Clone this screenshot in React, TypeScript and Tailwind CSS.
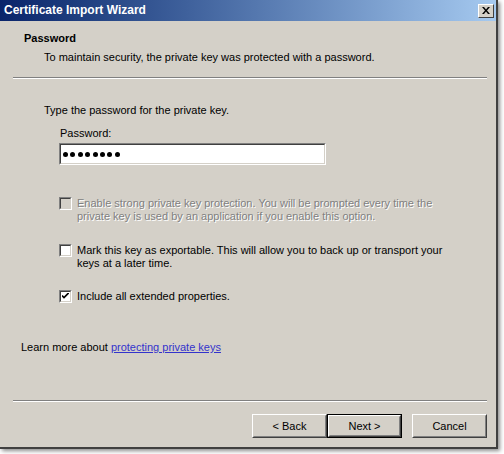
import React from "react";

const font = { fontFamily: '"Liberation Sans", Arial, sans-serif' };

function Check({ checked = false, disabled = false }: { checked?: boolean; disabled?: boolean }) {
  return (
    <div className="w-[13px] h-[13px] shrink-0 border border-t-[#808080] border-l-[#808080] border-r-white border-b-white">
      <div
        className={`w-full h-full border border-t-[#404040] border-l-[#404040] border-r-[#d4d0c8] border-b-[#d4d0c8] flex items-center justify-center ${
          disabled ? "bg-[#d4d0c8]" : "bg-white"
        }`}
      >
        {checked && (
          <svg width="7" height="7" viewBox="0 0 7 7">
            <path d="M0 2.5 L2 4.5 L7 -0.5" stroke="#000" strokeWidth="1.6" fill="none" />
          </svg>
        )}
      </div>
    </div>
  );
}

function Button({ label, def = false }: { label: string; def?: boolean }) {
  const inner = (
    <div className="h-full w-full border border-t-white border-l-white border-r-[#404040] border-b-[#404040]">
      <div className="h-full w-full border border-t-[#d4d0c8] border-l-[#d4d0c8] border-r-[#808080] border-b-[#808080] flex items-center justify-center text-[11px] text-black">
        {label}
      </div>
    </div>
  );
  return (
    <div className={`w-[75px] h-[24px] ${def ? "border border-black" : ""} bg-[#d4d0c8]`}>{inner}</div>
  );
}

export default function App() {
  return (
    <div className="w-[504px] h-[454px] bg-white overflow-hidden" style={font}>
      <div className="w-[498px] h-[449px] bg-[#d4d0c8] border-r-2 border-b-2 border-[#404040] shadow-[2px_2px_4px_rgba(0,0,0,0.45)] flex flex-col">
        {/* title bar */}
        <div className="h-[21px] flex items-center justify-between pl-[4px] pr-[2px] bg-gradient-to-r from-[#0a246a] to-[#a6caf0]">
          <span className="text-white font-bold text-[12px] leading-[13px]">Certificate Import Wizard</span>
          <div className="w-[16px] h-[14px] bg-[#d4d0c8] border border-t-white border-l-white border-r-[#404040] border-b-[#404040] flex items-center justify-center">
            <svg width="8" height="7" viewBox="0 0 8 7">
              <path d="M0 0 L2 0 L4 2.5 L6 0 L8 0 L5 3.5 L8 7 L6 7 L4 4.5 L2 7 L0 7 L3 3.5 Z" fill="#000" />
            </svg>
          </div>
        </div>

        {/* header */}
        <div className="text-[11px] leading-[13px] text-black">
          <div className="pl-[24px] pt-[11px] font-bold">Password</div>
          <div className="pl-[44px] pt-[6px]">To maintain security, the private key was protected with a password.</div>
        </div>
        <div className="mx-[13px] mt-[13px] w-[474px] h-[2px] border-t border-t-[#808080] border-b border-b-white" />

        {/* body */}
        <div className="text-[11px] leading-[13px] text-black flex flex-col">
          <div className="pl-[44px] mt-[25px]">Type the password for the private key.</div>
          <div className="pl-[60px] mt-[10px]">Password:</div>
          <div className="ml-[59px] mt-[3px] w-[267px] h-[22px] border border-t-[#808080] border-l-[#808080] border-r-white border-b-white">
            <div className="w-full h-full bg-white border border-t-[#404040] border-l-[#404040] border-r-[#d4d0c8] border-b-[#d4d0c8] flex items-center pl-[2px] gap-[2.4px]">
              {Array.from({ length: 8 }).map((_, i) => (
                <span key={i} className="w-[5px] h-[5px] rounded-full bg-black" />
              ))}
            </div>
          </div>

          <div className="ml-[59px] mt-[32px] flex gap-[5px] w-[380px]">
            <div className="pt-[0px]">
              <Check disabled />
            </div>
            <div className="text-[#808080] [text-shadow:1px_1px_0_#ffffff]">
              Enable strong private key protection. You will be prompted every time the
              <br />
              private key is used by an application if you enable this option.
            </div>
          </div>

          <div className="ml-[59px] mt-[21px] flex gap-[5px] w-[400px]">
            <Check />
            <div>
              Mark this key as exportable. This will allow you to back up or transport your
              <br />
              keys at a later time.
            </div>
          </div>

          <div className="ml-[59px] mt-[20px] flex gap-[5px]">
            <Check checked />
            <div>Include all extended properties.</div>
          </div>

          <div className="pl-[21px] mt-[38px]">
            Learn more about{" "}
            <span className="text-[#3333cc] underline">protecting private keys</span>
          </div>
        </div>

        <div className="mx-[13px] mt-[46px] w-[474px] h-[2px] border-t border-t-[#808080] border-b border-b-white" />

        <div className="flex justify-end mt-[12px] pr-[9px]">
          <Button label="< Back" />
          <Button label="Next >" def />
          <div className="w-[10px]" />
          <Button label="Cancel" />
        </div>
      </div>
    </div>
  );
}
